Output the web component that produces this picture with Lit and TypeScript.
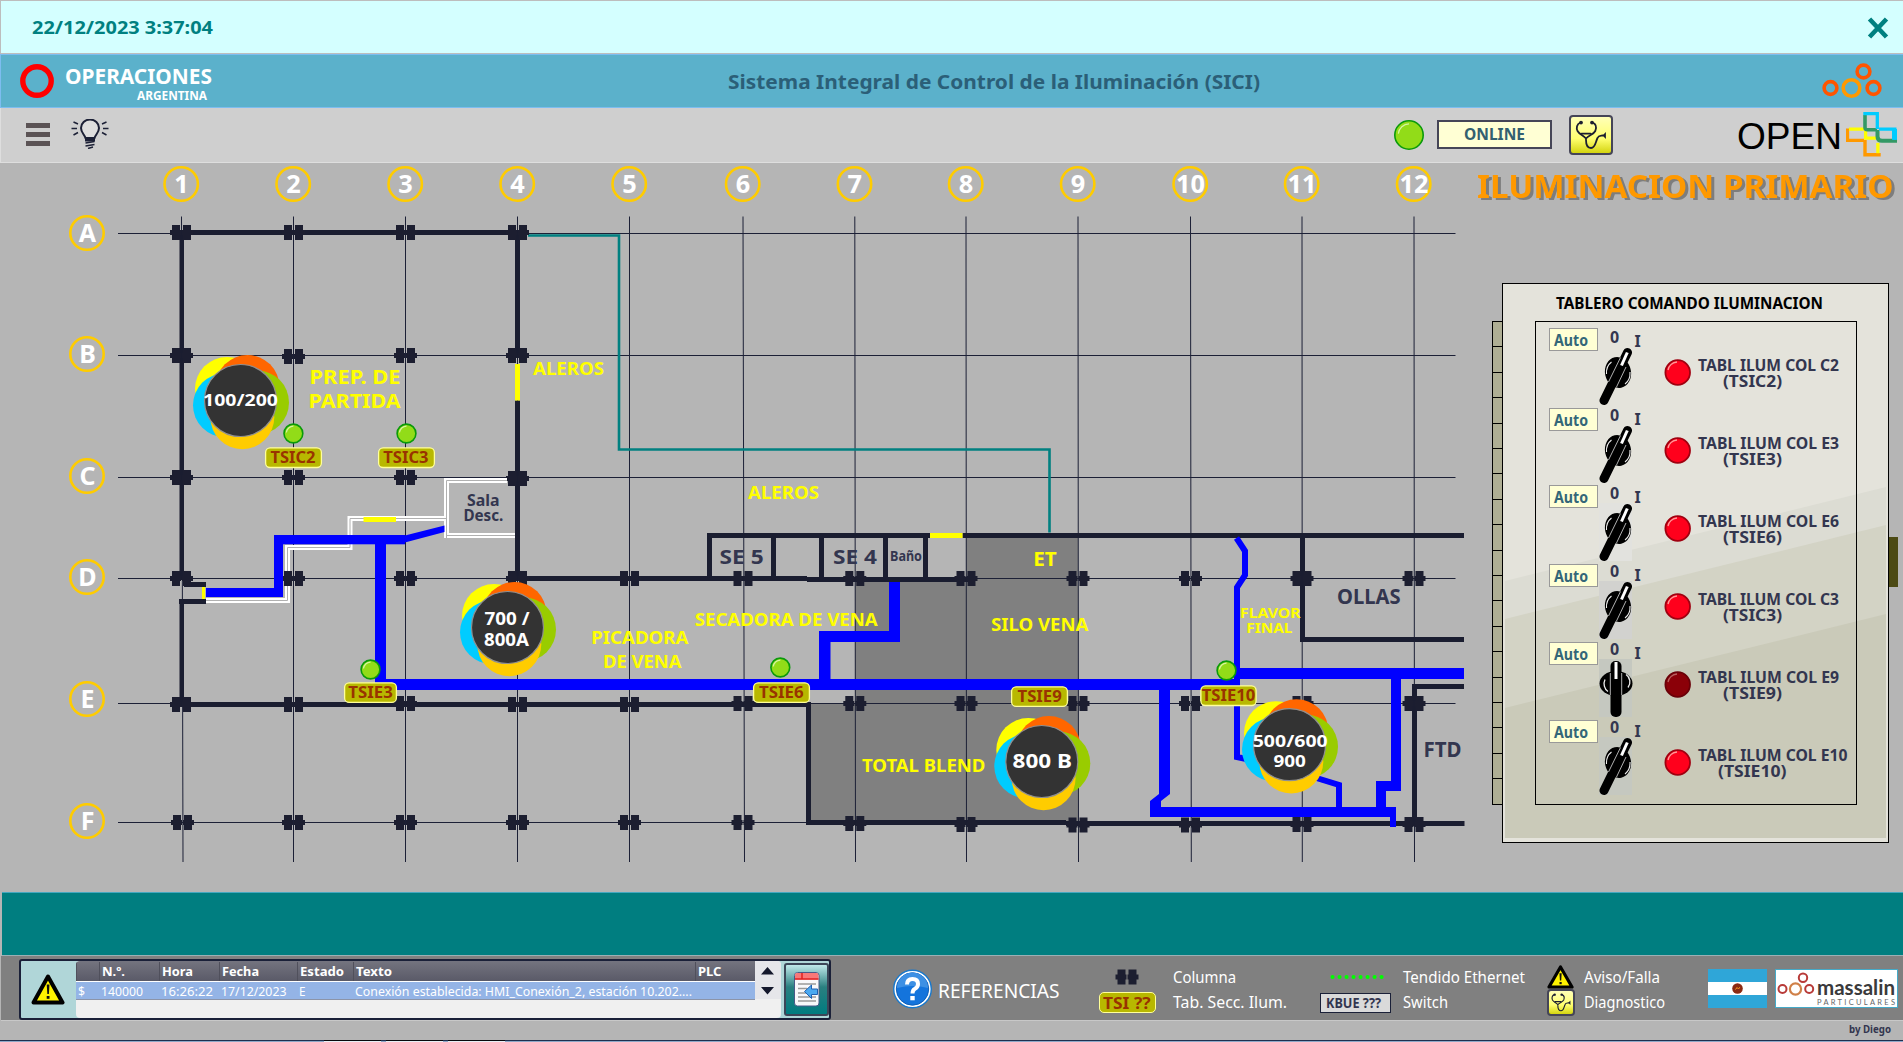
import { LitElement, html, svg, css } from "lit";
import { customElement, property } from "lit/decorators.js";

/* One line of text set to a fixed width; its capitals are centred in the box. */
const line = (text: string, width: number, size: number, cls = "") => html`
  <svg class="line ${cls}" width=${width} height=${size} font-size=${size}>
    <text x="0" y=${size * 0.857} textLength=${width} lengthAdjust="spacingAndGlyphs">${text}</text>
  </svg>`;

const textStyles = css`
  .line { display: block; flex: none; overflow: visible; fill: currentColor; font-weight: 400; }
  .b { font-weight: 700; }
  text { white-space: pre; }
`;

const lamp = (x: number, y: number, r: number) => svg`
  <circle cx=${x} cy=${y} r=${r} fill="#92dc18" stroke="#0a9a0a" stroke-width="1.6"></circle>
  <path d="M${x - r * 0.75} ${y - r * 0.1}A${r * 0.76} ${r * 0.76} 0 0 1 ${x} ${y - r * 0.78}" fill="none" stroke="#d6f5a0" stroke-width="1.2"></path>`;

const pillar = (x: number, y: number) => svg`
  <path fill="#1c1e30" d="M${x - 9.5} ${y - 7.5}h8v5h1v5h-1v5h-8v-5h-2v-5h2zM${x + 1.5} ${y - 7.5}h8v5h2v5h-2v5h-8v-5h-1v-5h1z"></path>`;

const scope = svg`
  <g fill="none" stroke="#1c1e30" stroke-width="1.8" stroke-linecap="round">
    <path d="M11.500 7.500C7.500 9 7.200 13 8.500 16C10.500 19.500 14 20 17 23.500C20 20 24.500 19.500 26.300 16C27.700 12.500 27 9 23.500 7.500"></path>
    <path d="M12.500 18.700H21.700"></path>
    <path d="M17 24.700C17 29 18 33 22 33C26.500 33 26.500 27 28.500 23C29.500 20.500 31 21 34 20.500"></path>
  </g>
  <circle cx="12" cy="7.600" r="1.900" fill="#1c1e30"></circle><circle cx="23" cy="7.600" r="1.900" fill="#1c1e30"></circle>
  <path d="M33.500 20.500l3.400-3.500v7z" fill="#1c1e30"></path>`;

const warning = (w: number, h: number) => html`
  <svg class="icon" width=${w} height=${h} viewBox="0 0 34 31" preserveAspectRatio="none">
    <path d="M17 2.500L31.500 28.500H2.500z" fill="#fff200" stroke="#000" stroke-width="4" stroke-linejoin="round"></path>
    <path d="M15.700 10.500h2.800l-.6 9.500h-1.600z" fill="#111"></path><rect x="15.700" y="22" width="2.800" height="2.800" fill="#111"></rect>
  </svg>`;

const GX = [181.5, 293.5, 405.5, 517.5, 629.5, 743, 854.8, 966, 1078, 1190.5, 1302, 1414];
const ROWS: [string, number, number][] = [
  ["A", 233, 233.5], ["B", 354, 355.5], ["C", 476, 477.5],
  ["D", 577, 578.5], ["E", 699, 703.5], ["F", 821, 822.5],
];
const PILLARS: number[][] = [
  [232.5, 232.5, 232.5, 232.5],
  [355.5, 356.5, 355.5, 355.5],
  [477.5, 477.5, 477.5, 478.5],
  [578.5, 578.5, 578.5, 578.5, 578.5, 578.5, 578.5, 578.5, 578.5, 578.5, 578.5, 578.5],
  [704.5, 704.5, 703.5, 704.5, 704.5, 703.5, 703.5, 703.5, 703.5, 703.5, 703.5, 703.5],
  [822.5, 822.5, 822.5, 822.5, 822.5, 822.5, 823.5, 824.5, 825, 825, 824.5, 824.5],
];
type Label = [string, number, number, number, number, string];
const LABELS: Label[] = [
  ["PREP. DE", 309.5, 384, 91, 20, "zone"], ["PARTIDA", 308.5, 407.7, 92, 20, "zone"],
  ["ALEROS", 533, 374.7, 71, 17.7, "zone"], ["ALEROS", 748, 499.2, 71, 17.7, "zone"],
  ["ET", 1033.3, 565.7, 23.5, 20, "zone"],
  ["SECADORA DE VENA", 694.8, 625.8, 182.8, 17.7, "zone"],
  ["PICADORA", 591.3, 644, 97, 17.7, "zone"], ["DE VENA", 603, 668, 78.6, 17.7, "zone"],
  ["SILO VENA", 991, 631, 97.4, 17.7, "zone"], ["TOTAL BLEND", 862, 772, 123.4, 17.7, "zone"],
  ["FLAVOR", 1240, 617.7, 60.5, 15, "zone"], ["FINAL", 1246.3, 633.3, 46, 15, "zone"],
  ["SE 5", 719.6, 563.8, 44, 20.3, "room"], ["SE 4", 833, 563.8, 44, 20.3, "room"], ["Baño", 890, 561.2, 32, 13.5, "room"],
  ["OLLAS", 1337, 604.2, 63.6, 20.7, "room"], ["FTD", 1423.5, 757, 38, 20.7, "room"],
  ["Sala", 467, 505.6, 32.5, 16.6, "room"], ["Desc.", 463.4, 521.3, 40, 16.6, "room"],
];
const TAGS: [string, number, number, number, number, number][] = [
  ["TSIC2", 265, 447.3, 57, 270.5, 45], ["TSIC3", 378, 447.3, 57, 383.3, 45.2],
  ["TSIE3", 344, 682.2, 53, 348.3, 44.5], ["TSIE6", 753, 682.2, 57, 759, 44.6],
  ["TSIE9", 1011, 686.2, 57, 1017.5, 44.3], ["TSIE10", 1200.3, 685.3, 56.4, 1201.7, 53.6],
];
type GaugeText = [string, number, number, number, number];
const GAUGES: [number, number, GaugeText[]][] = [
  [240.5, 400.5, [["100/200", 203, 406, 75, 16.5]]],
  [507.5, 627.5, [["700 /", 484.5, 625.3, 45, 17.3], ["800A", 484, 646.3, 45, 17.3]]],
  [1041.8, 761.5, [["800 B", 1012.5, 767.6, 59.5, 20.3]]],
  [1289.5, 744.7, [["500/600", 1252.7, 746.9, 75, 16.7], ["900", 1273.4, 767, 32.5, 16.7]]],
];
const WALLS: number[][] = [
  [170, 230, 359, 5], [179.5, 235, 4.5, 345], [184, 582, 22, 5], [179, 599, 27, 5], [179.5, 599, 4.5, 105],
  [515, 235, 5, 122], [515, 400.5, 5, 178], [517, 576, 290, 5], [807, 577, 163, 5],
  [707, 533, 223, 5], [962.5, 533, 501.5, 5],
  [707, 535, 5, 42], [771, 535, 5, 42], [819, 535, 5, 42], [883, 535, 5, 42], [923, 535, 5, 42],
  [181, 702, 630, 5], [806, 702, 5, 123], [806, 820, 260, 5], [1066, 821, 398.500, 5],
  [1300, 535, 5, 107], [1300, 637, 164, 5], [1412, 684, 5, 142], [1412, 684, 52, 5],
];
const PIPES: number[][] = [
  [274, 535, 131, 9.300], [274, 535, 9, 61.500], [206, 588, 77, 9], [375, 540, 11, 148], [375, 679, 862, 11],
  [819, 631, 11.500, 50], [819, 631, 81, 11], [889, 582, 11, 60], [1236, 668, 228, 11],
  [1159, 685, 11, 109], [1150, 807, 246, 10], [1390, 807, 6, 20], [1376, 781, 10, 30], [1376, 781, 25, 10], [1391, 675, 10, 116],
];
const rects = (list: number[][], fill: string) =>
  list.map(([x, y, w, h]) => svg`<rect x=${x} y=${y} width=${w} height=${h} fill=${fill}></rect>`);

@customElement("plant-map")
class PlantMap extends LitElement {
  static styles = [textStyles, css`
    :host { display: block; flex: none; width: 1480px; height: 729px; }
    svg { display: block; font-family: "Noto Sans", sans-serif; font-weight: 700; }
    .zone { fill: #ffff00; } .room { fill: #33364f; } .tag { fill: #993300; } .white { fill: #fff; }
    .wide { font-size: 25px; text-anchor: middle; fill: #fff; }
  `];

  gauge([cx, cy, texts]: [number, number, GaugeText[]]) {
    return svg`
      <circle cx=${cx - 13.5} cy=${cy - 11.5} r="32" fill="#ffff00"></circle>
      <circle cx=${cx - 15.5} cy=${cy + 4.7} r="32" fill="#00ccff"></circle>
      <circle cx=${cx + 7} cy=${cy - 13.5} r="32" fill="#ff6600"></circle>
      <circle cx=${cx + 16.5} cy=${cy + 2} r="32" fill="#99cc00"></circle>
      <circle cx=${cx + 1.8} cy=${cy + 16.700} r="32" fill="#ffcc00"></circle>
      <circle cx=${cx} cy=${cy} r="36" fill="#333" stroke="#8f8f8f" stroke-width="1.2"></circle>
      ${texts.map(([t, x, y, w, s]) => svg`<text class="white" x=${x} y=${y} font-size=${s} textLength=${w} lengthAdjust="spacingAndGlyphs">${t}</text>`)}`;
  }

  render() {
    return html`<svg width="1480" height="729" viewBox="0 163 1480 729">
      <g fill="#808080">
        <rect x="966" y="538" width="112" height="41"></rect>
        <rect x="855" y="578" width="223" height="126"></rect>
        <rect x="809" y="703" width="269" height="120"></rect>
      </g>
      <g stroke="#1c2036" stroke-width="1">
        ${GX.map((x, i) => svg`<line x1=${x} y1="216.500" x2=${x + [1.5, 0, 0, 0, 0, 1.5, 0.7, 0.5, 0.5, 0.8, 0.3, 0.5][i]} y2="862"></line>`)}
        ${ROWS.map(([, , y]) => svg`<line x1="118" y1=${y} x2="1455.500" y2=${y}></line>`)}
      </g>
      ${rects(WALLS, "#1a1d30")}
      <path d="M528 235.500H619V449.500H1049.500V532.500" fill="none" stroke="#008080" stroke-width="2.600"></path>
      ${PILLARS.map((row) => row.map((y, i) => pillar(GX[i] + (i === 0 && row[0] > 800 ? 1 : 0), y)))}
      <g fill="none" stroke-linejoin="miter">
        <g stroke="#fff" stroke-width="5">
          <path d="M446 518.500H350V547.500H287.500V600.500H206"></path>
          <path d="M507 480.500H446.500V535.500H515"></path>
        </g>
        <g stroke="#b0b0b0" stroke-width="1">
          <path d="M446 518.500H350V547.500H287.500V600.500H206"></path>
          <path d="M507 480.500H446.500V538M446.500 535.500H515"></path>
        </g>
      </g>
      ${pillar(293.5, 578.5)}
      ${rects(PIPES, "#0000ff")}
      <path fill="#0000ff" d="M403 536L444.500 525.500V532L403 543zM1159 794L1150 801V810H1161V801L1170 794z"></path>
      <g fill="none" stroke="#0000ff" stroke-width="6">
        <path d="M1236.500 538L1245 551V575L1237 587.500V757L1260 762M1310 776L1339 785V808"></path>
      </g>
      <g fill="#ffff00">
        <rect x="515" y="364" width="5" height="36.500"></rect><rect x="363.500" y="517" width="32.500" height="5"></rect>
        <rect x="202" y="587" width="3" height="12"></rect><rect x="930" y="533" width="32.500" height="5"></rect>
      </g>
      ${GX.map((x, i) => svg`<circle cx=${x - 0.3} cy="184" r="16.700" fill="none" stroke="#ffcc00" stroke-width="2.600"></circle>
        <text class="wide" x=${x} y="193" textLength=${i > 8 ? 29 : 14.5} lengthAdjust="spacingAndGlyphs">${i + 1}</text>`)}
      ${ROWS.map(([name, cy]) => svg`<circle cx="87" cy=${cy} r="16.700" fill="none" stroke="#ffcc00" stroke-width="2.600"></circle>
        <text class="wide" x="87.500" y=${cy + 9}>${name}</text>`)}
      ${LABELS.map(([t, x, y, w, s, c]) => svg`<text class=${c} x=${x} y=${y} font-size=${s} textLength=${w} lengthAdjust="spacingAndGlyphs">${t}</text>`)}
      ${[[293.4, 433.5], [406.5, 433.5], [370.5, 669.5], [780.3, 667.5], [1226.5, 670.5]].map(([x, y]) => lamp(x, y, 9.4))}
      ${TAGS.map(([t, x, y, w, tx, tw]) => svg`
        <rect x=${x + 0.6} y=${y + 0.6} width=${w - 1.2} height="19.600" rx="4.500" fill="#b8b800" stroke="#ffff99" stroke-width="1.300"></rect>
        <text class="tag" x=${tx} y=${y + 16} font-size="15.800" textLength=${tw} lengthAdjust="spacingAndGlyphs">${t}</text>`)}
      ${GAUGES.map((g) => this.gauge(g))}
    </svg>`;
  }
}

@customElement("switch-row")
class SwitchRow extends LitElement {
  @property() code = "";
  @property({ type: Boolean }) on = false;
  @property({ type: Number }) drop = 0;
  @property() tint = "transparent";

  static styles = [textStyles, css`
    :host { display: flex; height: 78px; color: #33364f; font-family: "Noto Sans", sans-serif; font-weight: 700; }
    .mode { box-sizing: border-box; width: 49px; height: 23px; margin: 7px 1px 0 13px; padding: 0 4px; flex: none;
      display: flex; align-items: center; border: 1px solid #999; background: #ffffd4; color: #336678; }
    .knob, .led { display: block; flex: none; }
    .name { padding: 35px 0 0 3px; }
    .name .line + .line { margin: 0 0 0 24.500px; }
    .name .long + .line { margin-left: 20px; }
  `];

  render() {
    const n = this.code.length > 2;
    return html`
      <div class="mode" style="transform: translateY(${this.drop}px)">${line("Auto", 34, 16, "b")}</div>
      <svg class="knob" width="60" height="88" viewBox="0 0 60 88">
        <rect x="0" y="25" width="33" height="58" fill=${this.tint}></rect>
        <text x="11" y="20.500" font-size="16" fill="#33364f">0</text>
        <text x="35.500" y="24.500" font-size="16" fill="#33364f">I</text>
        ${this.on
          ? svg`<ellipse cx="19" cy="50.500" rx="13" ry="15.500" fill="#000" transform="rotate(-12 19 50.500)"></ellipse>
            <path d="M7.500 52a11 13 0 0 1 5-12M31 50a11 13 0 0 1-5 12" fill="none" stroke="#eee" stroke-width="1.100"></path>
            <path d="M28.500 30.500L5 78.500" stroke="#000" stroke-width="9" stroke-linecap="round"></path>
            <path d="M21.500 35.500L9.500 60M27 45L17.500 65" stroke="#ddd" stroke-width=".8"></path>
            <path d="M28.300 30.500L22.500 43.500" stroke="#fff" stroke-width="3"></path>`
          : svg`<ellipse cx="17" cy="49.500" rx="16.500" ry="12.500" fill="#000"></ellipse>
            <path d="M9 57.500a8 9 0 0 1-3-12M27 40.500a9 9 0 0 1 2 13" fill="none" stroke="#eee" stroke-width="1.300"></path>
            <rect x="11.500" y="27" width="11" height="56" rx="5" fill="#000"></rect>
            <path d="M11.300 39v22M22.700 39v22" stroke="#ddd" stroke-width=".8"></path>
            <rect x="15.500" y="28" width="3" height="17" fill="#fff"></rect>`}
      </svg>
      <svg class="led" width="36" height="78" viewBox="0 0 36 78">
        <circle cx="18.700" cy="50.500" r="12.300" fill=${this.on ? "#ff001c" : "#8b0008"} stroke=${this.on ? "#a00010" : "#6a0008"} stroke-width="1.800"></circle>
        <path d="M9 48a10 10 0 0 1 9-8" fill="none" stroke=${this.on ? "#ff9a9a" : "#b86060"} stroke-width="1.300"></path>
      </svg>
      <div class="name">
        ${line(`TABL ILUM COL ${this.code}`, n ? 149.5 : 141, 16, n ? "b long" : "b")}
        ${line(`(TSI${this.code})`, n ? 68.5 : 59, 16, "b")}
      </div>`;
  }
}

@customElement("app-root")
class AppRoot extends LitElement {
  static styles = [textStyles, css`
    :host { display: flex; flex-direction: column; box-sizing: border-box; width: 1903px; height: 1042px; overflow: hidden;
      background: #b5b5b5; font-family: "Noto Sans", sans-serif; color: #fff; }
    svg { display: block; flex: none; }
    .icon { display: block; }
    .grow { flex: 1; }
    .top { box-sizing: border-box; height: 54px; flex: none; display: flex; align-items: center; justify-content: space-between;
      padding: 1px 14px 0 30.500px; background: #d4ffff; border: solid #bdbdbd; border-width: 1px 0 1px 1px; color: #008080; }
    .brand { box-sizing: border-box; height: 54px; flex: none; display: grid; grid-template-columns: 708px 532px 1fr; align-items: center;
      padding: 0 18px 0 19px; background: #5bb1cb; border: 1px solid #7dbdf0; border-right: 0; }
    .ops { display: flex; align-items: center; gap: 11px; }
    .names { display: flex; flex-direction: column; align-items: flex-end; gap: 2px; padding-top: 6px; }
    .names .line:last-child { margin-right: 5px; }
    .title { color: #2b5f78; padding-top: 2px; }
    .logo { justify-self: end; }
    .tools { box-sizing: border-box; height: 55px; flex: none; display: flex; align-items: center; padding: 0 6px 1px 25px;
      background: #cfcfcf; border: solid #dedede; border-width: 0 0 1px 1px; }
    .bulb { margin: 0 0 2px 21px; }
    .online { box-sizing: border-box; width: 115px; height: 29px; margin: 0 17px 0 12px; border: 2px solid #454557; background: #ffffd4;
      color: #336070; display: flex; align-items: center; justify-content: center; }
    .diag { box-sizing: border-box; border: 2px solid #454557; border-radius: 4px; background: linear-gradient(#ffffb8, #ffff70 60%, #d4d410); }
    .diag.large { width: 44px; height: 40px; margin-right: 124px; }
    .diag.small { width: 28px; height: 27px; }
    .diag svg { width: 100%; height: 100%; }
    .open { font: 37px "Liberation Sans", Arial, sans-serif; color: #000; }
    .main { display: flex; height: 729px; flex: none; }
    .side { flex: 1; }
    .heading { color: #ff9900; margin-left: -3px; padding: 7px 0 0; filter: drop-shadow(3px 2px 0 #7d7d7d); }
    .cabinet { display: flex; align-items: flex-start; margin: 80.500px 0 0 12px; }
    .hinge { box-sizing: border-box; width: 11px; height: 484px; margin: 38px -1px 0 0; border: 1px solid #000; background:
      repeating-linear-gradient(#aeae94 0 24.400px, #000 24.400px 25.400px); }
    .door { box-sizing: border-box; width: 387px; height: 560px; border: 1px solid #000; padding: 11px 0 0 32px; color: #000; position: relative;
      background: #e4e3db; }
    .sheen { position: absolute; left: 2px; top: 0; }
    .door .line { margin-left: 21px; }
    .rows { box-sizing: border-box; position: relative; width: 322px; height: 484px; margin-top: 10px; border: 1px solid #000; }
    .handle { width: 10px; height: 50px; margin-top: 254px; margin-left: -1px; background: #4c4a14; }
    .banner { box-sizing: border-box; height: 64px; flex: none; margin-left: 2px; background: #007e80; border: solid #45a8c0; border-width: 1px 0 1px 0; border-bottom-color: #9ab0b5; }
    .foot { box-sizing: border-box; height: 65px; flex: none; display: flex; align-items: center; margin-left: 1px; padding: 0 4px 0 18px; background: #808080;
      border-bottom: 1px solid #c8c8c8; }
    .alarms { box-sizing: border-box; width: 812px; height: 61px; display: flex; align-self: flex-end; border: 2px solid #1a2038; border-radius: 3px; background: #b0d6d8; }
    .warn { width: 55px; display: flex; align-items: center; justify-content: center; }
    .table { width: 706px; background: #f0f0f0; display: flex; height: 57px; border-radius: 4px; overflow: hidden; }
    .grid { width: 679px; }
    .hrow, .drow { display: grid; grid-template-columns: 23px 60px 60px 78px 56px 342px 60px; align-items: center; }
    .hrow { height: 20px; background: linear-gradient(#74747f, #5a5a68); border-bottom: 1px solid #fff; }
    .hrow > div { height: 19px; display: flex; align-items: center; padding-left: 2px; border-left: 1px solid #50505c; }
    .drow { height: 17px; background: #94b4e6; border-bottom: 1px solid #8c94a8; }
    .drow > div { padding: 1px 0 0 2px; }
    .scroll { width: 26px; height: 38px; background: #e6e6ea; }
    .ack { box-sizing: border-box; width: 45px; height: 53px; margin: 2px 0 0 3px; border: 2px solid #3c4658; border-radius: 3px;
      background: linear-gradient(#c0e8ea, #2a8080 45%, #007c80); display: flex; align-items: center; justify-content: center; }
    .help { margin: 2px 6px 0 62px; }
    .ref { margin-top: 4px; }
    .legend { display: grid; grid-template-rows: 27px 24px; align-items: center; margin-top: 2px; }
    .l1 { grid-template-columns: 74px 114px; margin-left: 39px; }
    .l2 { grid-template-columns: 83px 122px; margin-left: 33px; }
    .l3 { grid-template-columns: 37px 81px; margin-left: 22px; }
    .legend > .icon { justify-self: center; }
    .l1 > .icon { margin-right: 17px; } .l2 > .icon { margin-right: 8px; }
    .l3 > .icon { margin-right: 9px; }
    .tsi { box-sizing: border-box; width: 57px; height: 21px; border: 1.300px solid #ffff99; border-radius: 5px; background: #b8b800; color: #993300;
      display: flex; align-items: center; justify-content: center; }
    .kbue { box-sizing: border-box; width: 71px; height: 20px; border: 1.500px solid #1a2038; background: #dadada; color: #33364f; display: flex; align-items: center; padding-left: 5px; }
    .flag { margin: 1px 8px 0 43px; }
    .maker { margin-top: 1px; }
    .sign { display: flex; justify-content: flex-end; padding: 3px 12px 0 0; height: 16px; color: #33364f; }
    .edge { height: 2px; flex: none; display: flex; gap: 5px; padding-left: 324px; background: linear-gradient(#1e3050 50%, #8fa8c8 50%); }
    .edge i { width: 57px; background: linear-gradient(#08080c 50%, #e8eef4 50%); }
  `];

  ring(x: number, y: number, r: number, c: string, w: number) {
    return svg`<circle cx=${x} cy=${y} r=${r} fill="none" stroke=${c} stroke-width=${w}></circle>`;
  }

  render() {
    return html`
      <header class="top">
        ${line("22/12/2023 3:37:04", 181, 18.5, "b")}
        <svg width="22" height="22" viewBox="0 0 22 22"><path d="M2.500 2L19.500 20M19.500 2L2.500 20" stroke="#008080" stroke-width="4.600"></path></svg>
      </header>
      <div class="brand">
        <div class="ops">
          <svg width="34" height="34">${this.ring(17, 17, 14.2, "#ff0000", 5.4)}</svg>
          <div class="names">${line("OPERACIONES", 147, 21, "b")}${line("ARGENTINA", 70, 12.6, "b")}</div>
        </div>
        <div class="title">${line("Sistema Integral de Control de la Iluminación (SICI)", 532, 20, "b")}</div>
        <svg class="logo" width="64" height="36" viewBox="0 0 64 36">
          ${this.ring(9.500, 25, 6.400, "#ff5500", 3.600)}${this.ring(30.500, 25, 8.300, "#ff9900", 3.600)}
          ${this.ring(42.500, 8.500, 6.400, "#ff5500", 3.600)}${this.ring(52.500, 25, 6.400, "#ff5500", 3.600)}
        </svg>
      </div>
      <div class="tools">
        <svg width="24" height="23"><path d="M0 0h24v5H0zM0 9h24v5H0zM0 18h24v5H0z" fill="#5b5355"></path></svg>
        <svg class="bulb" width="38" height="30" viewBox="0 0 38 30">
          <path d="M14.500 19C13.500 15.500 10 13.500 10 9A9 8.500 0 0 1 28 9C28 13.500 24.500 15.500 23.500 19z" fill="#dedede" stroke="#1c2036" stroke-width="2"></path>
          <path d="M14 19h10v3.500H14z" fill="#1c2036"></path>
          <path d="M14.500 24l9-1.500M14.500 27l9-1.500M17 29.500l5-1.500" stroke="#1c2036" stroke-width="1.500"></path>
          <path d="M7 5L2.500 3M6 9.500H.5M7 13.500l-4.500 2.500M31 5l4.500-2M32 9.500h5.500M31 13.500l4.500 2.500" stroke="#1c2036" stroke-width="1.500"></path>
        </svg>
        <span class="grow"></span>
        <svg width="32" height="32">${lamp(16, 16, 14.2)}</svg>
        <div class="online">${line("ONLINE", 61, 15.3, "b")}</div>
        <div class="diag large"><svg viewBox="2 2 40 36">${scope}</svg></div>
        <svg class="open" width="109" height="44"><text x="0" y="36" textLength="105" lengthAdjust="spacingAndGlyphs" fill="#000">OPEN</text></svg>
        <svg width="51" height="45" viewBox="0 0 51 45" fill="none" stroke-width="3.300">
          <path d="M1.500 16.500V28.300H18" stroke="#ff9900"></path>
          <path d="M3 17.200H18M19.600 18.700V26.200H30.500" stroke="#ffff00"></path>
          <path d="M19 3V15.500Q19 17.800 21.500 17.800H31" stroke="#339966" stroke-width="3.600"></path>
          <path d="M17.300 1.700H31.300V17" stroke="#00ccff"></path>
          <path d="M31.500 18V24.500Q31.500 28.800 36 28.800H51" stroke="#339966" stroke-width="4"></path>
          <path d="M33 17.200H48.800V27.800" stroke="#00ccff"></path><path d="M48.500 17V27.800" stroke="#00ccff" stroke-width="5"></path>
          <path d="M19 28V42.800H34.700" stroke="#ff9900" stroke-width="3.400"></path>
          <path d="M31.900 30.800V41.200" stroke="#ffff00"></path>
        </svg>
      </div>
      <main class="main">
        <plant-map></plant-map>
        <section class="side">
          <div class="heading">${line("ILUMINACION PRIMARIO", 416.500, 32.500, "b")}</div>
          <div class="cabinet">
            <div class="hinge"></div>
            <div class="door">
              <svg class="sheen" width="381" height="558" viewBox="0 0 381 558">
                <path d="M0 297L381 203V554H0z" fill="#dcdcd3"></path>
                <path d="M0 335L381 241V554H0z" fill="#d3d3c5"></path>
                <path d="M0 424L381 330V554H0z" fill="#cacab9"></path>
              </svg>
              ${line("TABLERO COMANDO ILUMINACION", 267, 16, "b")}
              <div class="rows">
                <switch-row code="C2" on .drop=${-1}></switch-row>
                <switch-row code="E3" on .drop=${1}></switch-row>
                <switch-row code="E6" on .tint=${"#e2e2de"}></switch-row>
                <switch-row code="C3" on .drop=${1} .tint=${"#d2d2cf"}></switch-row>
                <switch-row code="E9" .drop=${1} .tint=${"#c5c8c0"}></switch-row>
                <switch-row code="E10" on .drop=${1} .tint=${"#c5c8c0"}></switch-row>
              </div>
            </div>
            <div class="handle"></div>
          </div>
        </section>
      </main>
      <div class="banner"></div>
      <footer class="foot">
        <div class="alarms">
          <div class="warn">${warning(34, 31)}</div>
          <div class="table">
            <div class="grid">
              <div class="hrow">
                <div></div><div>${line("N.º.", 23, 13, "b")}</div><div>${line("Hora", 31, 13, "b")}</div><div>${line("Fecha", 37, 13, "b")}</div>
                <div>${line("Estado", 44, 13, "b")}</div><div>${line("Texto", 36, 13, "b")}</div><div>${line("PLC", 23.500, 13, "b")}</div>
              </div>
              <div class="drow">
                <div>${line("$", 7, 13)}</div><div>${line("140000", 42, 13)}</div><div>${line("16:26:22", 52, 13)}</div><div>${line("17/12/2023", 65.500, 13)}</div>
                <div>${line("E", 6.500, 13)}</div><div>${line("Conexión establecida: HMI_Conexión_2, estación 10.202....", 337, 13)}</div><div></div>
              </div>
            </div>
            <svg class="scroll" width="26" height="38"><path d="M6 13.500l6.500-7.500l6.500 7.500zM6 26h13l-6.500 7.500z" fill="#14182c"></path></svg>
          </div>
          <div class="ack">
            <svg width="26" height="35" viewBox="0 0 26 35">
              <rect x=".5" y=".5" width="24.500" height="33.500" rx="3" fill="#f8f8fa" stroke="#4a5a88"></rect>
              <path d="M1 7.500V3q0-2 2-2h19.500q2 0 2 2v4.500z" fill="#f87878"></path><path d="M1 7h23.500M8 1v6" stroke="#e02020" stroke-width="1.500"></path>
              <path d="M4 12h18M4 16.500h9M4 21h9M4 25h18M4 29h18" stroke="#999" stroke-width="1.500"></path>
              <path d="M10.500 19.500l7-6.500v4h6v5.500h-6v4z" fill="#4aa8f0" stroke="#2060b0"></path>
            </svg>
          </div>
        </div>
        <svg class="help" width="39" height="40" viewBox="0 0 39 40">
          <circle cx="19.500" cy="20" r="18.800" fill="#fff" stroke="#1878cc" stroke-width="1.400"></circle>
          <circle cx="19.500" cy="20" r="16.200" fill="#1474dc" stroke="#1060b8"></circle>
          <path d="M4 19a15.500 15.500 0 0 1 31 0q-15-4-31 0z" fill="#3d90e4"></path>
          <path d="M14 15.500q0-5.500 5.500-5.500t5.500 5q0 3-3 4.700q-2.500 1.300-2.500 4.800" fill="none" stroke="#fff" stroke-width="4"></path>
          <rect x="17.300" y="27" width="4.400" height="4.300" fill="#fff"></rect>
        </svg>
        <div class="ref">${line("REFERENCIAS", 121.500, 20.5)}</div>
        <div class="legend l1">
          <svg class="icon" width="24" height="16">${pillar(12, 8)}</svg>${line("Columna", 63, 16.400)}
          <div class="tsi">${line("TSI ??", 47.500, 15.800, "b")}</div>${line("Tab. Secc. Ilum.", 114, 16.400)}
        </div>
        <div class="legend l2">
          <svg class="icon" width="54" height="6"><path d="M2.500 3H54" stroke="#00ff00" stroke-width="4" stroke-linecap="round" stroke-dasharray="0.1 6.900"></path></svg>${line("Tendido Ethernet", 122, 16.400)}
          <div class="kbue">${line("KBUE ???", 55, 13.500, "b")}</div>${line("Switch", 45, 16.400)}
        </div>
        <div class="legend l3">
          ${warning(27, 24)}${line("Aviso/Falla", 76, 16.400)}
          <div class="diag small"><svg viewBox="3 2 38 36">${scope}</svg></div>${line("Diagnostico", 81, 16.400)}
        </div>
        <svg class="flag" width="59" height="39"><rect width="59" height="39" fill="#2fa6d8"></rect><rect y="13" width="59" height="13" fill="#fff"></rect>
          <circle cx="29.500" cy="19.500" r="5.300" fill="#8b2a12"></circle><path d="M27.500 20.500l1.500-2l1.500 1.500l1.300-1.800" fill="none" stroke="#ff9a20"></path></svg>
        <svg class="maker" width="123" height="39">
          <rect x=".5" y=".5" width="122" height="38" fill="#fff" stroke="#45aac8"></rect>
          ${this.ring(7.500, 20, 4, "#b83a38", 2)}${this.ring(20.500, 20, 5.600, "#d08048", 2.200)}${this.ring(28, 8.700, 4.200, "#b83a38", 2)}${this.ring(34.200, 20, 4, "#b83a38", 2)}
          <text x="42" y="25.700" font-family="Lato, sans-serif" font-size="20" font-weight="700" fill="#3a3a3c" textLength="78" lengthAdjust="spacingAndGlyphs">massalin</text>
          <text x="42" y="36" font-family="Lato, sans-serif" font-size="7.500" fill="#666" textLength="78">PARTICULARES</text>
        </svg>
      </footer>
      <div class="sign">${line("by Diego", 42, 11, "b")}</div>
      <div class="edge"><i></i><i></i><i></i></div>`;
  }
}
